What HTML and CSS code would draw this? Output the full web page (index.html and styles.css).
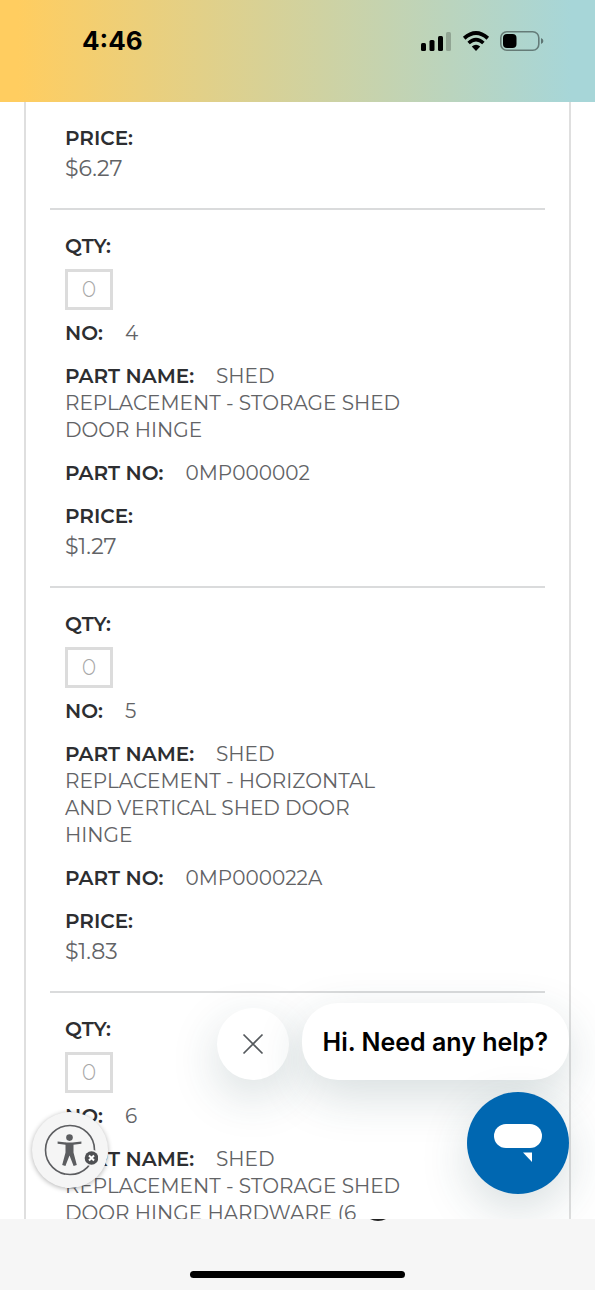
FILE: index.html
```
<!DOCTYPE html>
<html lang="en">

<head>
    <meta charset="UTF-8">
    <meta name="viewport" content="width=device-width, initial-scale=1.0">
    <title>Replacement Parts</title>
    <link rel="stylesheet" href="styles.css">
</head>

<body>
    <header class="status-bar">
        <span class="time">4:46</span>
        <div class="status-icons">
            <svg width="31" height="20" viewBox="0 0 31 20">
                <rect x="0" y="12" width="5" height="8" rx="1.5"/>
                <rect x="8.5" y="9" width="5" height="11" rx="1.5"/>
                <rect x="17" y="5" width="5" height="15" rx="1.5"/>
                <rect x="25" y="1" width="5" height="19" rx="1.5" opacity="0.22"/>
            </svg>
            <svg width="28" height="20" viewBox="0 0 28 20">
                <path d="M2.2 7.2 Q14 -3.2 25.8 7.2" fill="none" stroke="#000" stroke-width="3.8"/>
                <path d="M6.6 12 Q14 5.4 21.4 12" fill="none" stroke="#000" stroke-width="3.6"/>
                <path d="M14 20 L9.8 15.6 Q14 12 18.2 15.6 Z"/>
            </svg>
            <svg width="44" height="20" viewBox="0 0 44 20">
                <rect x="0.8" y="0.8" width="38" height="18.4" rx="6" fill="none" stroke="#000" stroke-opacity="0.42" stroke-width="1.6"/>
                <rect x="3" y="3" width="13.5" height="14" rx="4"/>
                <path d="M41 7 Q43.4 8 43.4 10 Q43.4 12 41 13 Z" opacity="0.45"/>
            </svg>
        </div>
    </header>

    <main class="page">
        <div class="parts">
            <section class="part">
                <p class="price"><strong>Price:</strong><span>$6.27</span></p>
            </section>

            <section class="part">
                <label for="qty4">Qty:</label>
                <input type="text" id="qty4" placeholder="0">
                <p><strong>No:</strong>4</p>
                <p><strong>Part Name:</strong>Shed<br>Replacement - Storage Shed<br>Door Hinge</p>
                <p><strong>Part No:</strong>0MP000002</p>
                <p class="price"><strong>Price:</strong><span>$1.27</span></p>
            </section>

            <section class="part">
                <label for="qty5">Qty:</label>
                <input type="text" id="qty5" placeholder="0">
                <p><strong>No:</strong>5</p>
                <p><strong>Part Name:</strong>Shed<br>Replacement - Horizontal<br>and Vertical Shed Door<br>Hinge</p>
                <p><strong>Part No:</strong>0MP000022A</p>
                <p class="price"><strong>Price:</strong><span>$1.83</span></p>
            </section>

            <section class="part">
                <label for="qty6">Qty:</label>
                <input type="text" id="qty6" placeholder="0">
                <p><strong>No:</strong>6</p>
                <p><strong>Part Name:</strong>Shed<br>Replacement - Storage Shed<br>Door Hinge Hardware (6</p>
            </section>
        </div>

        <button class="accessibility" aria-label="Accessibility options">
            <svg width="56" height="56" viewBox="0 0 56 56">
                <circle cx="28" cy="28" r="24.5" fill="none" stroke="#5c5d60" stroke-width="1.6"/>
                <circle cx="27.5" cy="15.6" r="3.3" fill="#5c5d60"/>
                <path d="M15.6 19.4 L24.5 20.4 H30.5 L39.4 19.4 V21.8 L31.5 22.8 V30.5 L34.8 43 L31.6 44 L27.5 33.5 L23.4 44 L20.2 43 L23.5 30.5 V22.8 L15.6 21.8 Z" fill="#5c5d60"/>
                <circle cx="49.5" cy="36" r="8.2" fill="#f5f5f5"/>
                <circle cx="49.5" cy="36" r="6.8" fill="#4f5053"/>
                <path d="M47 33.5 L52 38.5 M52 33.5 L47 38.5" stroke="#fff" stroke-width="2"/>
            </svg>
        </button>

        <div class="chat">
            <div class="chat-greeting">
                <button class="chat-close" aria-label="Close">
                    <svg width="22" height="22" viewBox="0 0 22 22">
                        <path d="M1.5 1.5 L20.5 20.5 M20.5 1.5 L1.5 20.5" stroke="#55595d" stroke-width="1.7"/>
                    </svg>
                </button>
                <button class="chat-message">Hi. Need any help?</button>
            </div>
            <button class="chat-open" aria-label="Open chat">
                <svg width="48" height="40" viewBox="0 0 48 40">
                    <rect x="0" y="1" width="48" height="24" rx="12" fill="#fff"/>
                    <path d="M29 29.5 H38 V39 Z" fill="#fff"/>
                </svg>
            </button>
        </div>
    </main>

    <footer class="browser-bar">
        <svg class="url-edge" width="18" height="4" viewBox="0 0 18 4">
            <path d="M1 0 H17 Q9 4 1 0 Z" fill="#222"/>
        </svg>
        <div class="home-indicator"></div>
    </footer>
</body>

</html>
```
FILE: styles.css
```
* {
    box-sizing: border-box;
}

body {
    margin: 0;
    height: 100vh;
    display: flex;
    flex-direction: column;
    overflow: hidden;
    font-family: Montserrat, Inter, sans-serif;
    font-size: 20px;
    line-height: 27px;
    color: #626366;
    background: #fff;
}

button {
    padding: 0;
    border: 0;
    font-family: inherit;
    cursor: pointer;
}

/* phone status bar */
.status-bar {
    flex: none;
    height: 102px;
    padding: 0 51px 21px 82px;
    display: flex;
    align-items: center;
    justify-content: space-between;
    background: linear-gradient(to right, #ffcd60 3%, #a7d6d8 96%);
}

.time {
    font-family: Inter, sans-serif;
    font-size: 26px;
    font-weight: 700;
    color: #000;
}

.status-icons {
    display: flex;
    gap: 10px;
}

/* parts list */
.page {
    flex: 1;
    min-height: 0;
    position: relative;
    overflow: hidden;
}

.parts {
    margin: 0 24px;
    padding: 0 24px;
    border: solid #dfdfdf;
    border-width: 0 2px;
}

.part {
    padding: 23px 15px 22px;
    border-bottom: 2px solid #dadbdc;
    text-transform: uppercase;
}

.part p {
    margin: 0 0 16px;
}

.part label {
    display: block;
    font-weight: 600;
    color: #2d2e31;
}

.part strong {
    margin-right: 22px;
    font-weight: 600;
    color: #2d2e31;
}

.part input {
    display: block;
    width: 48px;
    height: 41px;
    margin: 9px 0 10px;
    padding: 0;
    border: 3px solid #dcdcdc;
    background: transparent;
    font-family: inherit;
    font-size: 22px;
    font-weight: 300;
    text-align: center;
}

.part input::placeholder {
    color: #a8a8a8;
}

.part .price {
    margin: 0;
}

.price span {
    display: block;
    font-size: 22px;
    line-height: 34px;
}

/* floating buttons */
.accessibility {
    position: absolute;
    left: 32px;
    bottom: 31px;
    width: 76px;
    height: 76px;
    display: flex;
    align-items: center;
    justify-content: center;
    border-radius: 50%;
    background: #f5f5f5;
    box-shadow: 0 1px 5px rgba(0, 0, 0, 0.3);
}

.chat {
    position: absolute;
    right: 26px;
    bottom: 25px;
    display: flex;
    flex-direction: column;
    align-items: flex-end;
    gap: 12px;
}

.chat-greeting {
    display: flex;
    align-items: flex-end;
    gap: 13px;
}

.chat-close,
.chat-message,
.chat-open {
    display: flex;
    align-items: center;
    justify-content: center;
    box-shadow: 0 16px 48px rgba(35, 70, 80, 0.18);
}

.chat-close {
    width: 72px;
    height: 72px;
    border-radius: 50%;
    background: #fff;
}

.chat-message {
    height: 77px;
    padding: 0 21px;
    border-radius: 36px;
    background: #fff;
    font-family: Inter, sans-serif;
    font-size: 25px;
    font-weight: 600;
    color: #000;
}

.chat-open {
    width: 102px;
    height: 102px;
    border-radius: 50%;
    background: #0067b1;
}

/* browser bottom bar */
.browser-bar {
    flex: none;
    position: relative;
    height: 71px;
    padding-bottom: 12px;
    display: flex;
    align-items: flex-end;
    justify-content: center;
    background: #f6f6f6;
}

.url-edge {
    position: absolute;
    top: 0;
    left: 62%;
}

.home-indicator {
    width: 36%;
    height: 7px;
    border-radius: 4px;
    background: #000;
}
```
